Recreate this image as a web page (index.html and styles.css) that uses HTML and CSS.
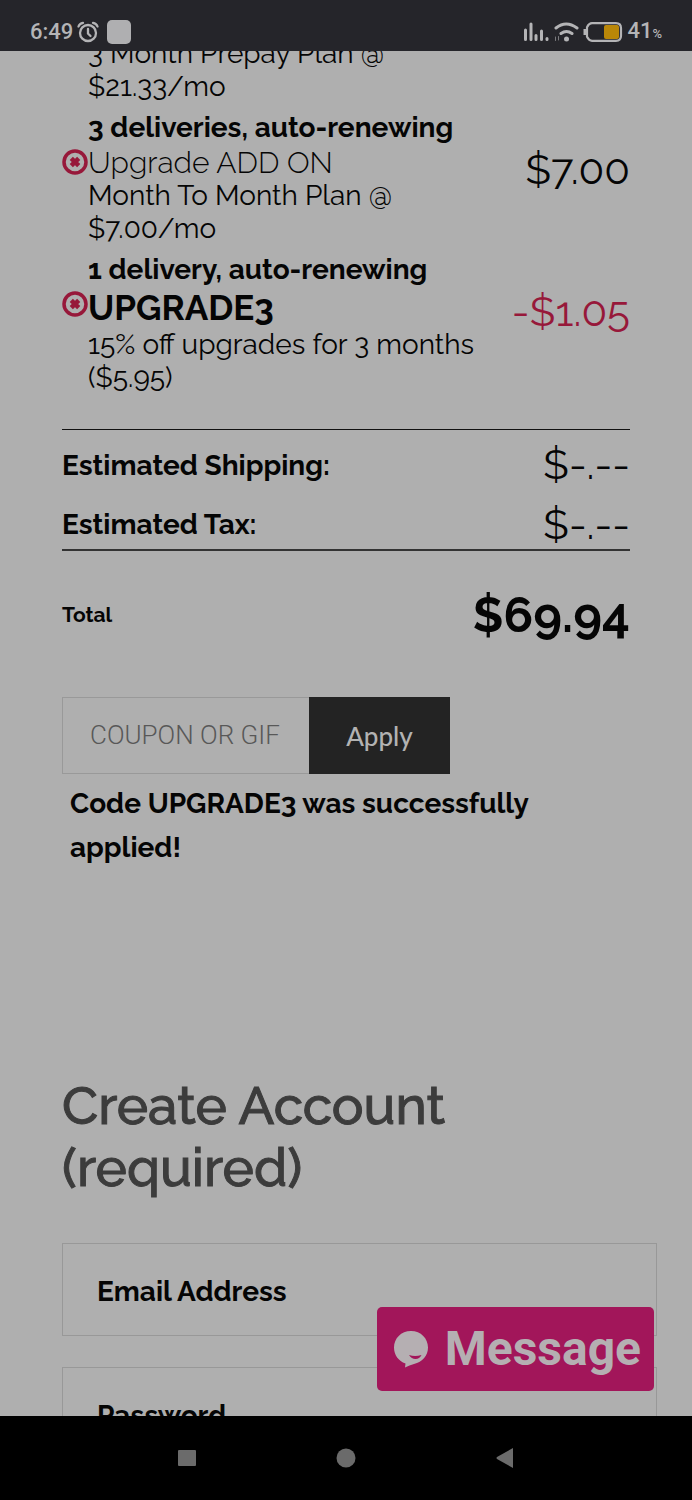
FILE: index.html
```html
<!DOCTYPE html>
<html lang="en">
<head>
<meta charset="utf-8">
<meta name="viewport" content="width=device-width, initial-scale=1">
<title>Checkout</title>
<link rel="stylesheet" href="styles.css">
</head>
<body>
<header class="status">
  <div class="status-group">
    <span class="clock">6:49</span>
    <svg class="alarm" width="22" height="22" viewBox="0 0 22 22" fill="none" stroke="currentColor" stroke-width="2.300" stroke-linecap="round"><circle cx="11" cy="12" r="8"/><path d="M11 8v4.500l2.500 2.500M1.500 5.500Q2.500 2.500 6 1.800M20.500 5.500Q19.500 2.500 16 1.800"/></svg>
    <span class="app-dot"></span>
  </div>
  <div class="status-group status-right">
    <svg width="26" height="20" viewBox="0 0 26 20" fill="none" stroke="currentColor" stroke-width="3" stroke-linecap="round"><path d="M2.500 8v9.500M8 2v15.500M13 13.500v4M18.500 9v8.500M24 16.500v1"/></svg>
    <svg width="26" height="20" viewBox="0 0 26 20" fill="none" stroke="currentColor" stroke-width="3" stroke-linecap="round"><path d="M3 6Q13-2 24 6M8 11.500Q13.500 7.500 19 11.500"/><circle cx="13.500" cy="17" r="2.500" fill="currentColor" stroke="none"/><path stroke-width="1" opacity=".6" d="M2.500 15v3.500M5.500 14.500v3.500"/></svg>
    <svg width="40" height="20" viewBox="0 0 40 20" fill="none"><rect x="21" y="3" width="15" height="14" rx="2" fill="#ba8708"/><path d="M9 1.200h24q5 0 5 5v7.600q0 5-5 5H9q-3 0-5-4V5.200q2-4 5-4z" stroke="currentColor" stroke-width="2.200"/><path d="M2 7v6" stroke="currentColor" stroke-width="3"/></svg>
    <span class="battery">41<small>%</small></span>
  </div>
</header>

<main class="page">
  <div class="content">
    <section class="order">
      <div class="item">
        <div class="item-text">
          <p>3 Month Prepay Plan @<br>$21.33/mo</p>
          <p class="renewal">3 deliveries, auto-renewing</p>
        </div>
      </div>
      <div class="item">
        <button class="remove" type="button" aria-label="Remove Upgrade ADD ON"><svg width="26" height="26" viewBox="0 0 26 26" fill="none" stroke="currentColor"><circle cx="13" cy="13" r="11" stroke-width="3.500"/><path d="M9.300 9.300l7.400 7.400M16.700 9.300l-7.400 7.400" stroke-width="4.500"/></svg></button>
        <div class="item-text">
          <p class="name">Upgrade ADD ON</p>
          <p>Month To Month Plan @<br>$7.00/mo</p>
          <p class="renewal">1 delivery, auto-renewing</p>
        </div>
        <span class="price">$7.00</span>
      </div>
      <div class="item">
        <button class="remove" type="button" aria-label="Remove UPGRADE3"><svg width="26" height="26" viewBox="0 0 26 26" fill="none" stroke="currentColor"><circle cx="13" cy="13" r="11" stroke-width="3.500"/><path d="M9.300 9.300l7.400 7.400M16.700 9.300l-7.400 7.400" stroke-width="4.500"/></svg></button>
        <div class="item-text">
          <p class="code">UPGRADE3</p>
          <p>15% off upgrades for 3 months<br>($5.95)</p>
        </div>
        <span class="price discount">-$1.05</span>
      </div>
    </section>

    <section class="estimates">
      <div class="estimate shipping"><span>Estimated Shipping:</span><span class="price pending">$-.--</span></div>
      <div class="estimate"><span>Estimated Tax:</span><span class="price pending">$-.--</span></div>
    </section>
    <div class="total"><span class="total-label">Total</span><span class="total-price">$69.94</span></div>

    <form class="coupon">
      <input class="coupon-input" type="text" placeholder="COUPON OR GIFT CODE" aria-label="Coupon or gift code">
      <button class="apply" type="button">Apply</button>
    </form>
    <p class="notice">Code UPGRADE3 was successfully applied!</p>

    <h2 class="heading">Create Account (required)</h2>
    <form class="account">
      <div class="field"><label for="email">Email Address</label><input id="email" type="email"></div>
      <div class="field"><label for="password">Password</label><input id="password" type="password"></div>
    </form>
  </div>
  <button class="message" type="button">
    <svg width="36" height="38" viewBox="0 0 36 38"><path fill="currentColor" d="M18 1C8 1 1 8.500 1 17.500 1 25 5.500 31 12.500 33.500L12 37.500C15 36 18 35 21 34 29.500 32 35 25.500 35 17.500 35 8.500 28 1 18 1z"/><path fill="#a2165a" d="M16 25q6 2 12.500 0-2 4-6 4t-6.500-4z"/></svg>
    <span>Message</span>
  </button>
</main>

<nav class="nav">
  <button type="button" aria-label="Recent apps"><svg width="18" height="16" viewBox="0 0 18 16"><rect width="18" height="16" rx="1" fill="currentColor"/></svg></button>
  <button type="button" aria-label="Home"><svg width="20" height="20" viewBox="0 0 20 20"><circle cx="10" cy="10" r="9.500" fill="currentColor"/></svg></button>
  <button type="button" aria-label="Back"><svg width="18" height="20" viewBox="0 0 18 20"><path d="M17 0v20L1 11q-1-1 0-2z" fill="currentColor"/></svg></button>
</nav>
</body>
</html>
```
FILE: styles.css
```css
* { box-sizing: border-box; }

body {
  margin: 0;
  height: 100vh;
  display: flex;
  flex-direction: column;
  overflow: hidden;
  background: #afafaf;
  color: #050505;
  font-family: Raleway, Lato, sans-serif;
  font-size: 28px;
  line-height: 33px;
}

p, h2 { margin: 0; }

button {
  border: 0;
  padding: 0;
  background: none;
  color: inherit;
  font: inherit;
}

svg { display: block; }

.status {
  flex: none;
  display: flex;
  justify-content: space-between;
  height: 51px;
  padding: 13px 30px 0;
  background: #25252a;
  color: #b4b4b6;
  font: 500 22px/38px Roboto, sans-serif;
}

.status-group {
  display: flex;
  align-items: center;
  gap: 4px;
  height: 38px;
}

.app-dot {
  width: 24px;
  height: 24px;
  margin-left: 4px;
  border-radius: 5px;
  background: #afafb1;
}

.battery small { font-size: 13px; }

.page {
  flex: 1;
  min-height: 0;
  position: relative;
  overflow: hidden;
}

.content {
  margin-top: -14px;
  padding: 0 62px;
}

.item {
  display: flex;
  align-items: flex-start;
}

.item-text {
  flex: 1;
  font-weight: 400;
}

.item-text:first-child { padding-left: 26px; }

.name {
  font-size: 30px;
  font-weight: 300;
}

.renewal {
  margin-top: 8px;
  font-weight: 700;
  line-height: 34px;
  padding-bottom: 1px;
}

.remove {
  flex: none;
  width: 26px;
  height: 31px;
  color: #97183a;
}

.code {
  font-size: 35px;
  font-weight: 700;
  line-height: 40px;
}

.price {
  font-size: 42px;
  font-weight: 400;
  line-height: 48px;
}

.pending { line-height: 50px; }

.discount { color: #97183a; }

.estimates {
  margin-top: 35px;
  border-top: 1px solid #111;
  border-bottom: 2px solid #333;
}

.estimate {
  display: flex;
  justify-content: space-between;
  align-items: center;
  height: 49px;
  font-weight: 700;
}

.shipping {
  height: 70px;
  padding: 10px 0;
}

.total {
  display: flex;
  justify-content: space-between;
  align-items: center;
  margin-top: 34px;
  font-weight: 700;
  line-height: 60px;
}

.total-label { font-size: 21px; }
.total-price { font-size: 49px; }

.coupon {
  display: flex;
  width: 388px;
  max-width: 100%;
  height: 77px;
  margin-top: 52px;
}

.coupon-input {
  flex: 1;
  min-width: 0;
  border: 1px solid #999;
  border-right: 0;
  padding: 0 29px 2px 27px;
  background: none;
  font: 300 26px Roboto, sans-serif;
}

.coupon-input::placeholder { color: #585858; opacity: 1; }

.apply {
  width: 141px;
  background: #232323;
  color: #b2b2b2;
  font: 500 26px Lato, sans-serif;
}

.notice {
  padding: 8px 60px 0 8px;
  font-weight: 700;
  line-height: 44px;
}

.heading {
  max-width: 440px;
  margin-top: 204px;
  color: #3c3c3c;
  font-size: 53px;
  font-weight: 500;
  line-height: 62px;
  -webkit-text-stroke: 1px #3c3c3c;
}

.account {
  display: grid;
  gap: 31px;
  margin: 45px -27px 0 0;
}

.field {
  display: flex;
  align-items: center;
  gap: 16px;
  height: 93px;
  border: 1px solid #989898;
  padding: 4px 34px 0;
  font-weight: 700;
}

.field input {
  flex: 1;
  min-width: 0;
  border: 0;
  background: none;
  font: inherit;
}

.message {
  position: absolute;
  right: 38px;
  bottom: 25px;
  display: flex;
  align-items: center;
  justify-content: space-between;
  width: 277px;
  height: 84px;
  padding: 0 13px 0 16px;
  border-radius: 5px;
  background: #a2165a;
  color: #b5afb2;
  font: 700 48px/84px Roboto, sans-serif;
}

.nav {
  flex: none;
  display: flex;
  justify-content: center;
  gap: 111px;
  height: 84px;
  background: #000;
  color: #6b6b6b;
}

.nav button {
  display: grid;
  place-items: center;
  width: 48px;
}
```
